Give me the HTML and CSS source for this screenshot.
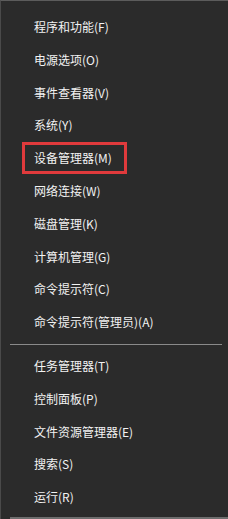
FILE: index.html
```html
<!DOCTYPE html>
<html lang="zh-CN">
<head>
    <meta charset="UTF-8">
    <meta name="viewport" content="width=device-width, initial-scale=1.0">
    <title>快速链接菜单</title>
    <link rel="stylesheet" href="styles.css">
</head>
<body>
    <div class="menu">
        <div class="item">程序和功能(F)</div>
        <div class="item">电源选项(O)</div>
        <div class="item">事件查看器(V)</div>
        <div class="item">系统(Y)</div>
        <div class="item marked">设备管理器(M)</div>
        <div class="item">网络连接(W)</div>
        <div class="item">磁盘管理(K)</div>
        <div class="item">计算机管理(G)</div>
        <div class="item">命令提示符(C)</div>
        <div class="item">命令提示符(管理员)(A)</div>
        <div class="sep"></div>
        <div class="item">任务管理器(T)</div>
        <div class="item">控制面板(P)</div>
        <div class="item">文件资源管理器(E)</div>
        <div class="item">搜索(S)</div>
        <div class="item">运行(R)</div>
        <div class="bottom"></div>
    </div>
</body>
</html>
```

FILE: styles.css
```css
html, body { margin: 0; height: 100%; background: #2b2b2b; }
body { font-family: "Noto Sans CJK SC", "Noto Sans", sans-serif; font-size: 12px; color: #f2f2f2; }
.menu { box-sizing: border-box; height: 519px; background: #2b2b2b; border-top: 1px solid #5c5c5c; border-left: 1px solid #4a4a4a; padding-top: 10px; display: flex; flex-direction: column; position: relative; }
.item { height: 32.8px; line-height: 32.8px; padding-left: 33px; position: relative; white-space: nowrap; }
.marked::after { content: ""; position: absolute; left: 21px; top: 0; width: 105px; height: 32px; box-sizing: border-box; border: 3px solid #e03a3c; }
.sep { height: 1px; background: #8a8a8a; margin: 5px 6px 5px 9px; }
.bottom { margin-top: auto; height: 2px; margin-left: 9px; background: #6e6e6e; }
```
